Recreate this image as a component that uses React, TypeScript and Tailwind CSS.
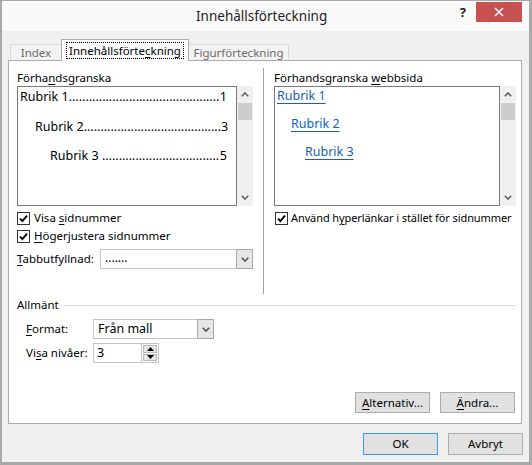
import React from "react";

const Chk = () => (
  <span className="w-[13px] h-[13px] border border-[#333333] bg-white flex items-center justify-center shrink-0">
    <svg width="9" height="9" viewBox="0 0 9 9">
      <path d="M1 4.6 L3.4 7 L8 1.6" stroke="#000" strokeWidth="1.9" fill="none" />
    </svg>
  </span>
);

const ChevDown = ({ color = "#606060" }: { color?: string }) => (
  <svg width="8" height="5" viewBox="0 0 8 5">
    <path d="M0.8 0.8 L4 4 L7.2 0.8" stroke={color} strokeWidth="1.6" fill="none" />
  </svg>
);
const ChevUp = ({ color = "#606060" }: { color?: string }) => (
  <svg width="8" height="5" viewBox="0 0 8 5">
    <path d="M0.8 4.2 L4 1 L7.2 4.2" stroke={color} strokeWidth="1.6" fill="none" />
  </svg>
);

const VScroll = () => (
  <div className="w-[16px] h-[120px] bg-[#f0f0f0] flex flex-col items-center">
    <div className="h-[17px] w-full flex items-center justify-center">
      <ChevUp />
    </div>
    <div className="w-[14px] h-[17px] bg-[#cdcdcd]" />
    <div className="flex-1" />
    <div className="h-[17px] w-full flex items-center justify-center">
      <ChevDown />
    </div>
  </div>
);

const TocRow = ({ label, dots, num, pl, mt }: { label: string; dots: number; num: string; pl: string; mt: string }) => (
  <div className={`flex justify-between h-[18px] leading-[18px] items-center text-[12.5px] text-black pr-[9px] whitespace-nowrap ${pl} ${mt}`}>
    <span>{label + ".".repeat(dots)}</span>
    <span>{num}</span>
  </div>
);

const Dropdown = ({ w, text, textCls }: { w: string; text: string; textCls: string }) => (
  <div className={`flex h-[20px] ${w}`}>
    <div className={`flex-1 flex items-center pl-[4px] bg-white border-y border-l border-[#c5c5c5] ${textCls}`}>{text}</div>
    <div className="w-[17px] h-[20px] border border-[#a8a8a8] bg-[#e6e6e6] flex items-center justify-center">
      <ChevDown color="#505050" />
    </div>
  </div>
);

const Btn = ({ children, w, primary }: { children: React.ReactNode; w: string; primary?: boolean }) => (
  <div
    className={`${w} h-full flex items-center justify-center bg-[#e1e1e1] border ${
      primary ? "border-[#3c9be8]" : "border-[#adadad]"
    } text-[11.5px] text-black`}
  >
    {children}
  </div>
);

export default function App() {
  return (
    <div className="w-[532px] h-[465px] bg-[#f0f0f0] border-t border-l-2 border-r-[3px] border-b-[3px] border-[#a9a9a9] flex flex-col font-['Noto_Sans',sans-serif] text-[11.5px] text-black overflow-hidden">
      {/* Title bar */}
      <div className="h-[30px] bg-[#f9f9f9] flex items-start shrink-0">
        <div className="pl-[194px] h-[30px] flex items-center text-[13.5px] text-[#1e1e1e]">
          Innehållsförteckning
        </div>
        <div className="flex-1" />
        <div className="h-[22px] mt-[1px] flex items-center text-[13px] font-bold text-[#222] mr-[10px]">?</div>
        <div className="w-[46px] h-[20px] mt-[1px] bg-[#c75050] flex items-center justify-center mr-[7px]">
          <svg width="10" height="10" viewBox="0 0 10 10">
            <path d="M1 1 L9 9 M9 1 L1 9" stroke="#fff" strokeWidth="1.5" />
          </svg>
        </div>
      </div>

      {/* Body */}
      <div className="flex-1 flex flex-col pl-[6px] pt-[8px]">
        {/* Tabs */}
        <div className="relative z-10 flex items-end h-[22px] -mb-px ml-[2px]">
          <div className="w-[51px] h-[16px] mb-[1px] border-t border-l border-[#d9d9d9] bg-[#f3f3f3] flex items-center justify-center text-[11.5px] text-[#6a6a6a]">
            Index
          </div>
          <div className="w-[128px] h-[22px] border-t border-l border-r border-[#acacac] bg-white flex items-start justify-center pt-[2px]">
            <div className="h-[17px] px-[2px] border border-dotted border-black flex items-center text-[11.5px] text-black">
              Innehållsförte<span className="underline underline-offset-2">c</span>kning
            </div>
          </div>
          <div className="w-[100px] h-[16px] mb-[1px] border-t border-r border-[#d9d9d9] bg-[#f3f3f3] flex items-center justify-center text-[11.5px] text-[#6a6a6a]">
            Figurförteckning
          </div>
        </div>

        {/* Panel */}
        <div className="w-[514px] h-[364px] bg-white border border-[#acacac] flex flex-col">
          <div className="h-[233px] flex">
            {/* Left column */}
            <div className="ml-[8px] w-[236px] pt-[9px] flex flex-col">
              <div className="h-[16px] leading-[16px]">
                Förha<span className="underline underline-offset-2">n</span>dsgranska
              </div>
              <div className="flex">
                <div className="w-[220px] h-[120px] border border-[#7a7a7a] bg-white pt-[1px]">
                  <TocRow label="Rubrik 1" dots={45} num="1" pl="pl-[2px]" mt="mt-0" />
                  <TocRow label="Rubrik 2" dots={41} num="3" pl="pl-[17px]" mt="mt-[12px]" />
                  <TocRow label={"Rubrik 3\u00a0"} dots={35} num="5" pl="pl-[32px]" mt="mt-[11px]" />
                </div>
                <VScroll />
              </div>
              <div className="mt-[4px] h-[16px] flex items-center gap-[4px]">
                <Chk />
                <span>
                  Visa <span className="underline underline-offset-2">s</span>idnummer
                </span>
              </div>
              <div className="mt-[2px] h-[16px] flex items-center gap-[4px]">
                <Chk />
                <span>
                  <span className="underline underline-offset-2">H</span>ögerjustera sidnummer
                </span>
              </div>
              <div className="mt-[5px] h-[20px] flex items-center">
                <span className="w-[83px]">
                  <span className="underline underline-offset-2">T</span>abbutfyllnad:
                </span>
                <Dropdown w="w-[153px]" text="......." textCls="text-[12px] pb-[3px]" />
              </div>
            </div>

            {/* Separator */}
            <div className="ml-[10px] mt-[7px] w-px h-[226px] bg-[#a0a0a0]" />

            {/* Right column */}
            <div className="ml-[10px] flex-1 pt-[9px] flex flex-col">
              <div className="h-[16px] leading-[16px]">
                Förhandsgranska <span className="underline underline-offset-2">w</span>ebbsida
              </div>
              <div className="flex">
                <div className="w-[226px] h-[120px] border border-[#7a7a7a] bg-white flex flex-col items-start text-[12.5px] text-[#1560bd]">
                  <div className="h-[18px] leading-[18px] ml-[2px] underline underline-offset-[3px]">Rubrik 1</div>
                  <div className="h-[18px] leading-[18px] ml-[16px] mt-[10px] underline underline-offset-[3px]">Rubrik 2</div>
                  <div className="h-[18px] leading-[18px] ml-[30px] mt-[10px] underline underline-offset-[3px]">Rubrik 3</div>
                </div>
                <VScroll />
              </div>
              <div className="mt-[4px] h-[16px] flex items-center gap-[3px] ml-[1px] whitespace-nowrap">
                <Chk />
                <span className="text-[11px] tracking-[-0.1px]">
                  Använd h<span className="underline underline-offset-2">y</span>perlänkar i stället för sidnummer
                </span>
              </div>
            </div>
          </div>

          {/* Allmänt */}
          <div className="mt-[3px] h-[16px] flex items-center pl-[8px] pr-[6px]">
            <span>Allmänt</span>
            <div className="flex-1 h-px bg-[#dcdcdc] ml-[5px]" />
          </div>
          <div className="mt-[6px] h-[20px] flex items-center pl-[17px]">
            <span className="w-[67px]">
              <span className="underline underline-offset-2">F</span>ormat:
            </span>
            <Dropdown w="w-[121px]" text="Från mall" textCls="text-[12.5px]" />
          </div>
          <div className="mt-[4px] h-[20px] flex items-center pl-[17px]">
            <span className="w-[67px]">
              Vi<span className="underline underline-offset-2">s</span>a nivåer:
            </span>
            <div className="flex h-[20px] w-[66px]">
              <div className="flex-1 flex items-center pl-[3px] bg-white border-y border-l border-[#c5c5c5] text-[12.5px]">3</div>
              <div className="w-[18px] h-[20px] border border-[#c5c5c5] bg-white flex flex-col p-px gap-px">
                <div className="flex-1 bg-[#e6e6e6] border border-[#b8b8b8] flex items-center justify-center">
                  <svg width="7" height="4" viewBox="0 0 7 4"><path d="M0 4 L3.5 0 L7 4 Z" fill="#000" /></svg>
                </div>
                <div className="flex-1 bg-[#e6e6e6] border border-[#b8b8b8] flex items-center justify-center">
                  <svg width="7" height="4" viewBox="0 0 7 4"><path d="M0 0 L3.5 4 L7 0 Z" fill="#000" /></svg>
                </div>
              </div>
            </div>
          </div>

          <div className="flex-1" />
          <div className="h-[21px] mb-[10px] flex justify-end gap-[10px] pr-[6px]">
            <Btn w="w-[75px]">
              <span className="underline underline-offset-2">A</span>lternativ...
            </Btn>
            <Btn w="w-[75px]">
              <span className="underline underline-offset-2">Ä</span>ndra...
            </Btn>
          </div>
        </div>

        {/* Bottom buttons */}
        <div className="mt-[9px] h-[22px] flex justify-end gap-[10px] pr-[6px]">
          <Btn w="w-[75px]" primary>OK</Btn>
          <Btn w="w-[75px]">Avbryt</Btn>
        </div>
      </div>
    </div>
  );
}
